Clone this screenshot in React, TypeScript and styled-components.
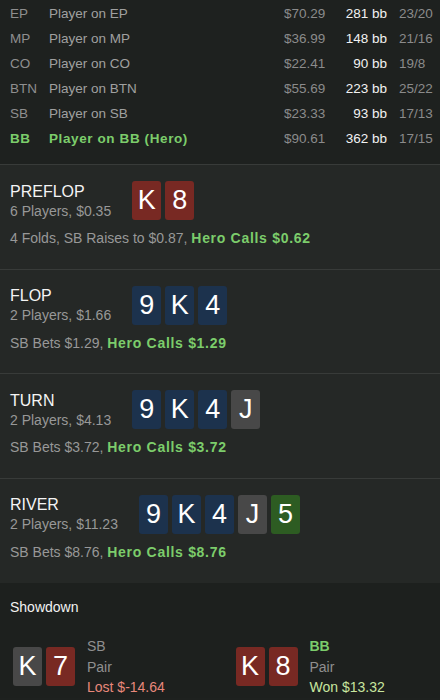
import React from "react";
import styled, { createGlobalStyle } from "styled-components";

const Global = createGlobalStyle`
  html, body { margin: 0; padding: 0; background: #1e211f; }
  body { font-family: "Liberation Sans", Arial, sans-serif; -webkit-font-smoothing: antialiased; }
  * { box-sizing: border-box; }
`;

const Page = styled.div`
  width: 440px;
  height: 700px;
  overflow: hidden;
  background: #1e211f;
  color: #a0a0a0;
`;

const PlayerList = styled.div`
  padding: 1px 0 13px 10px;
  border-bottom: 1px solid #383b39;
`;

const PlayerRow = styled.div`
  display: grid;
  grid-template-columns: 39px 1fr 56px 47px 53px;
  height: 25px;
  align-items: center;
  font-size: 13.5px;
  white-space: nowrap;
`;

const Pos = styled.span<{ $hero?: boolean }>`
  color: ${(p) => (p.$hero ? "#7ccd6b" : "#8f8f8f")};
  font-weight: ${(p) => (p.$hero ? 700 : 400)};
  letter-spacing: ${(p) => (p.$hero ? "0.6px" : "0")};
`;

const Name = styled.span<{ $hero?: boolean }>`
  color: ${(p) => (p.$hero ? "#7ccd6b" : "#a0a0a0")};
  font-weight: ${(p) => (p.$hero ? 700 : 400)};
  letter-spacing: ${(p) => (p.$hero ? "0.6px" : "0")};
`;

const Money = styled.span`
  color: #8b8b8b;
`;

const BB = styled.span`
  color: #f2f2f2;
  text-align: right;
`;

const Ratio = styled.span`
  color: #8b8b8b;
  padding-left: 12px;
`;

const Street = styled.section<{ $last?: boolean }>`
  background: #252826;
  padding: 16px 10px 21.5px 10px;
  border-bottom: 1px solid ${(p) => (p.$last ? "#252826" : "#383b39")};
`;

const StreetHead = styled.div`
  display: flex;
  align-items: center;
  gap: 21px;
`;

const StreetInfo = styled.div`
  display: flex;
  flex-direction: column;
`;

const StreetTitle = styled.div`
  color: #f4f4f4;
  font-size: 16px;
  line-height: 20px;
`;

const StreetSub = styled.div`
  color: #989898;
  font-size: 14px;
  line-height: 18px;
  white-space: nowrap;
`;

const Cards = styled.div`
  display: flex;
  gap: 4px;
`;

type Tone = "red" | "blue" | "gray" | "green";
const toneColor: Record<Tone, string> = {
  red: "#782923",
  blue: "#1c324d",
  gray: "#484848",
  green: "#2d5c22",
};

const Card = styled.div<{ $tone: Tone }>`
  width: 29px;
  height: 39px;
  border-radius: 3px;
  background: ${(p) => toneColor[p.$tone]};
  color: #ffffff;
  font-size: 27px;
  display: flex;
  align-items: center;
  justify-content: center;
  line-height: 1;
`;

const Action = styled.div`
  margin-top: 9px;
  font-size: 14px;
  line-height: 18px;
  color: #989898;
  white-space: nowrap;
`;

const HeroAct = styled.span`
  color: #7ccd6b;
  font-weight: 700;
  letter-spacing: 0.7px;
`;

const Showdown = styled.section`
  background: #1d201e;
  padding: 16px 13px 0;
`;

const ShowTitle = styled.div`
  color: #f2f2f2;
  font-size: 14px;
  line-height: 17px;
  margin-left: -3px;
`;

const Hands = styled.div`
  margin-top: 20px;
  display: grid;
  grid-template-columns: 1fr 1fr;
  column-gap: 31px;
`;

const Hand = styled.div`
  display: flex;
  align-items: center;
  gap: 12px;
`;

const HandInfo = styled.div`
  display: flex;
  flex-direction: column;
  font-size: 14px;
  line-height: 20.5px;
  white-space: nowrap;
`;

const Who = styled.span<{ $hero?: boolean }>`
  color: ${(p) => (p.$hero ? "#7ccd6b" : "#8f8f8f")};
  font-weight: ${(p) => (p.$hero ? 700 : 400)};
`;

const HandName = styled.span`
  color: #8f8f8f;
`;

const Result = styled.span<{ $won?: boolean }>`
  color: ${(p) => (p.$won ? "#c8e69e" : "#e8887b")};
`;

const players = [
  { pos: "EP", name: "Player on EP", money: "$70.29", bb: "281 bb", r: "23/20" },
  { pos: "MP", name: "Player on MP", money: "$36.99", bb: "148 bb", r: "21/16" },
  { pos: "CO", name: "Player on CO", money: "$22.41", bb: "90 bb", r: "19/8" },
  { pos: "BTN", name: "Player on BTN", money: "$55.69", bb: "223 bb", r: "25/22" },
  { pos: "SB", name: "Player on SB", money: "$23.33", bb: "93 bb", r: "17/13" },
  { pos: "BB", name: "Player on BB (Hero)", money: "$90.61", bb: "362 bb", r: "17/15", hero: true },
];

type C = [string, Tone];
const streets: { title: string; sub: string; cards: C[]; pre: string; hero: string }[] = [
  { title: "PREFLOP", sub: "6 Players, $0.35", cards: [["K", "red"], ["8", "red"]], pre: "4 Folds, SB Raises to $0.87, ", hero: "Hero Calls $0.62" },
  { title: "FLOP", sub: "2 Players, $1.66", cards: [["9", "blue"], ["K", "blue"], ["4", "blue"]], pre: "SB Bets $1.29, ", hero: "Hero Calls $1.29" },
  { title: "TURN", sub: "2 Players, $4.13", cards: [["9", "blue"], ["K", "blue"], ["4", "blue"], ["J", "gray"]], pre: "SB Bets $3.72, ", hero: "Hero Calls $3.72" },
  { title: "RIVER", sub: "2 Players, $11.23", cards: [["9", "blue"], ["K", "blue"], ["4", "blue"], ["J", "gray"], ["5", "green"]], pre: "SB Bets $8.76, ", hero: "Hero Calls $8.76" },
];

export default function App() {
  return (
    <Page>
      <Global />
      <PlayerList>
        {players.map((p) => (
          <PlayerRow key={p.pos}>
            <Pos $hero={p.hero}>{p.pos}</Pos>
            <Name $hero={p.hero}>{p.name}</Name>
            <Money>{p.money}</Money>
            <BB>{p.bb}</BB>
            <Ratio>{p.r}</Ratio>
          </PlayerRow>
        ))}
      </PlayerList>
      {streets.map((s, i) => (
        <Street key={s.title} $last={i === streets.length - 1}>
          <StreetHead>
            <StreetInfo>
              <StreetTitle>{s.title}</StreetTitle>
              <StreetSub>{s.sub}</StreetSub>
            </StreetInfo>
            <Cards>
              {s.cards.map(([v, t], j) => (
                <Card key={j} $tone={t}>{v}</Card>
              ))}
            </Cards>
          </StreetHead>
          <Action>
            {s.pre}
            <HeroAct>{s.hero}</HeroAct>
          </Action>
        </Street>
      ))}
      <Showdown>
        <ShowTitle>Showdown</ShowTitle>
        <Hands>
          <Hand>
            <Cards>
              <Card $tone="gray">K</Card>
              <Card $tone="red">7</Card>
            </Cards>
            <HandInfo>
              <Who>SB</Who>
              <HandName>Pair</HandName>
              <Result>Lost $-14.64</Result>
            </HandInfo>
          </Hand>
          <Hand>
            <Cards>
              <Card $tone="red">K</Card>
              <Card $tone="red">8</Card>
            </Cards>
            <HandInfo>
              <Who $hero>BB</Who>
              <HandName>Pair</HandName>
              <Result $won>Won $13.32</Result>
            </HandInfo>
          </Hand>
        </Hands>
      </Showdown>
    </Page>
  );
}
